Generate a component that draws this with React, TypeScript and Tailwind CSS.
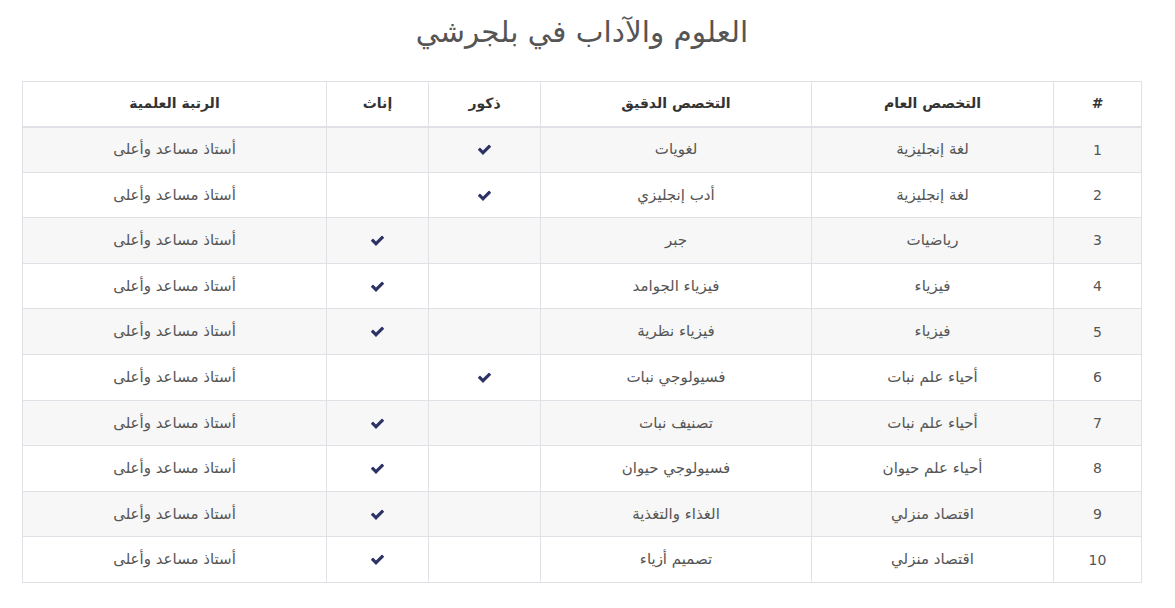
import React from 'react';

const rows = [
  { n: 1, general: 'لغة إنجليزية', special: 'لغويات', male: true, female: false },
  { n: 2, general: 'لغة إنجليزية', special: 'أدب إنجليزي', male: true, female: false },
  { n: 3, general: 'رياضيات', special: 'جبر', male: false, female: true },
  { n: 4, general: 'فيزياء', special: 'فيزياء الجوامد', male: false, female: true },
  { n: 5, general: 'فيزياء', special: 'فيزياء نظرية', male: false, female: true },
  { n: 6, general: 'أحياء علم نبات', special: 'فسيولوجي نبات', male: true, female: false },
  { n: 7, general: 'أحياء علم نبات', special: 'تصنيف نبات', male: false, female: true },
  { n: 8, general: 'أحياء علم حيوان', special: 'فسيولوجي حيوان', male: false, female: true },
  { n: 9, general: 'اقتصاد منزلي', special: 'الغذاء والتغذية', male: false, female: true },
  { n: 10, general: 'اقتصاد منزلي', special: 'تصميم أزياء', male: false, female: true }
];

// heavy check mark, like the old icon font one
function Check() {
  return (
    <svg viewBox="0 0 1792 1792" className="inline-block w-[15px] h-[15px] text-[#2c3263] align-middle">
      <path
        fill="currentColor"
        d="M1671 566q0 40-28 68l-724 724-136 136q-28 28-68 28t-68-28l-136-136-362-362q-28-28-28-68t28-68l136-136q28-28 68-28t68 28l294 295 656-657q28-28 68-28t68 28l136 136q28 28 28 68z"
      />
    </svg>
  );
}

export default function App() {
  return (
    <div dir="rtl" className="w-[1175px] h-[608px] bg-white text-[#555] pl-[22px] pr-[33px] pt-[14px]" style={{ fontFamily: '"DejaVu Sans", "Open Sans", sans-serif' }}>
      <h1 className="text-center text-[29.5px] leading-[36px] text-[#555] font-normal mb-[31px]">
        العلوم والآداب في بلجرشي
      </h1>

      <table className="w-[1120px] border-collapse border border-[#e0e0e6] text-[15px]">
        <thead>
          <tr className="h-[45px] text-[#333] text-[14px] border-b-2 border-[#e0e0e6]">
            <th className="w-[88px] border border-[#e0e0e6] font-bold">#</th>
            <th className="w-[242px] border border-[#e0e0e6] font-bold">التخصص العام</th>
            <th className="w-[271px] border border-[#e0e0e6] font-bold">التخصص الدقيق</th>
            <th className="w-[112px] border border-[#e0e0e6] font-bold">ذكور</th>
            <th className="w-[102px] border border-[#e0e0e6] font-bold">إناث</th>
            <th className="border border-[#e0e0e6] font-bold">الرتبة العلمية</th>
          </tr>
        </thead>
        <tbody>
          {rows.map((r, i) => (
            <tr key={r.n} className={i % 2 === 0 ? 'h-[45.6px] bg-[#f7f7f7]' : 'h-[45.6px] bg-white'}>
              <td className="border border-[#e0e0e6] text-center text-[14px] pt-[1px]">{r.n}</td>
              <td className="border border-[#e0e0e6] text-center">{r.general}</td>
              <td className="border border-[#e0e0e6] text-center">{r.special}</td>
              <td className="border border-[#e0e0e6] text-center">{r.male && <Check />}</td>
              <td className="border border-[#e0e0e6] text-center">{r.female && <Check />}</td>
              <td className="border border-[#e0e0e6] text-center">أستاذ مساعد وأعلى</td>
            </tr>
          ))}
        </tbody>
      </table>
    </div>
  );
}
